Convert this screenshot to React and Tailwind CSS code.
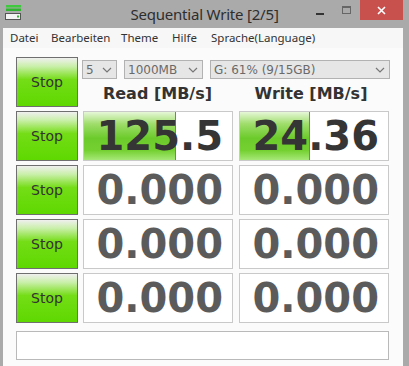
import React from 'react';

const rows = [
  { read: '125.5', write: '24.36', readBar: 92, writeBar: 70, active: true },
  { read: '0.000', write: '0.000' },
  { read: '0.000', write: '0.000' },
  { read: '0.000', write: '0.000' },
];

const menu = [
  { label: 'Datei', w: 'w-[41px]' },
  { label: 'Bearbeiten', w: 'w-[70px]' },
  { label: 'Theme', w: 'w-[51px]' },
  { label: 'Hilfe', w: 'w-[39px]' },
  { label: 'Sprache(Language)', w: '' },
];

function StopButton() {
  return (
    <button className="w-[62px] h-[50px] border border-[#6f6f6f] bg-[linear-gradient(to_bottom,#f0f0f0_0%,#c8efa6_18%,#74dd16_45%,#5ed800_100%)] text-[14px] text-[#333] [font-family:'DejaVu_Sans',sans-serif]">
      Stop
    </button>
  );
}

function Cell({ value, bar, active }) {
  return (
    <div className="relative w-[150px] h-[50px] border border-[#c9c9c9] bg-white overflow-hidden">
      {bar ? (
        <div
          className="absolute left-0 top-0 bottom-0 border-r border-[#4ea81a] bg-[linear-gradient(to_bottom,#e6f7d8_0%,#9edd6a_25%,#6ccb2a_55%,#74d030_80%,#a6e878_100%)]"
          style={{ width: bar }}
        />
      ) : null}
      <div
        className={`relative h-full flex items-center justify-end pr-[9px] text-[40px] font-bold leading-none [font-family:'DejaVu_Sans',sans-serif] ${
          active ? 'text-[#353535]' : 'text-[#5b5b5b]'
        }`}
      >
        {value}
      </div>
    </div>
  );
}

function Select({ label, width }) {
  return (
    <div
      className="h-[19px] flex items-center justify-between border border-[#b2b2b2] bg-[#e6e6e6] pl-[3px] pr-[4px] text-[12px] text-[#6a6a6a] [font-family:'DejaVu_Sans',sans-serif]"
      style={{ width }}
    >
      <span>{label}</span>
      <svg width="10" height="6" viewBox="0 0 10 6">
        <path d="M1 1 L5 5 L9 1" fill="none" stroke="#777" strokeWidth="1.2" />
      </svg>
    </div>
  );
}

export default function App() {
  return (
    <div className="w-[409px] h-[366px] bg-[#aaaaaa] flex flex-col overflow-hidden">
      <div className="h-[28px] relative flex items-center justify-center">
        <svg className="absolute left-[5px] top-[5px]" width="17" height="16" viewBox="0 0 17 16">
          <rect x="1" y="0" width="15" height="2.5" fill="#3ec93e" />
          <rect x="1" y="3.5" width="15" height="2.5" fill="#2fb52f" />
          <rect x="0.5" y="8.5" width="15" height="6" fill="#f4f4f4" stroke="#555" />
          <rect x="12" y="10.5" width="2" height="2" fill="#2fb52f" />
        </svg>
        <span className="text-[15px] text-[#2e2e2e] [font-family:'Noto_Sans',sans-serif] tracking-[-0.2px]">
          Sequential Write [2/5]
        </span>
        <div className="absolute left-[316px] top-[13px] w-[8px] h-[2px] bg-[#333]" />
        <div className="absolute left-[342px] top-[6px] w-[9px] h-[8px] border border-[#666] border-t-2" />
        <div className="absolute left-[360px] top-0 w-[43px] h-[20px] bg-[#c9514d] flex items-center justify-center">
          <svg width="9" height="9" viewBox="0 0 9 9">
            <path d="M1 1 L8 8 M8 1 L1 8" stroke="#fff" strokeWidth="1.6" />
          </svg>
        </div>
      </div>
      <div className="flex-1 ml-[3px] mr-[6px] bg-[#fbfbfb] flex flex-col">
        <div className="h-[20px] bg-[#f7f7f7] flex items-center pl-[7px] text-[11.5px] text-[#333] [font-family:'Noto_Sans',sans-serif]">
          {menu.map((m) => (
            <span key={m.label} className={m.w}>
              {m.label}
            </span>
          ))}
        </div>
        <div className="pl-[13px] pt-[9px] flex flex-col gap-[4px]">
          <div className="flex h-[50px]">
            <StopButton />
            <div className="ml-[4px] flex flex-col">
              <div className="mt-[3px] flex gap-[7px]">
                <Select label="5" width={35} />
                <Select label="1000MB" width={79} />
                <Select label="G: 61% (9/15GB)" width={180} />
              </div>
              <div className="flex mt-[7px] text-[16px] font-bold text-[#333] leading-none [font-family:'DejaVu_Sans',sans-serif]">
                <div className="w-[151px] text-center">Read [MB/s]</div>
                <div className="w-[156px] text-center">Write [MB/s]</div>
              </div>
            </div>
          </div>
          {rows.map((r, i) => (
            <div key={i} className="flex h-[50px]">
              <StopButton />
              <div className="ml-[5px]">
                <Cell value={r.read} bar={r.readBar} active={r.active} />
              </div>
              <div className="ml-[6px]">
                <Cell value={r.write} bar={r.writeBar} active={r.active} />
              </div>
            </div>
          ))}
          <div className="mt-[4px] w-[373px] h-[29px] border border-[#b9b9b9] bg-white" />
        </div>
      </div>
    </div>
  );
}
